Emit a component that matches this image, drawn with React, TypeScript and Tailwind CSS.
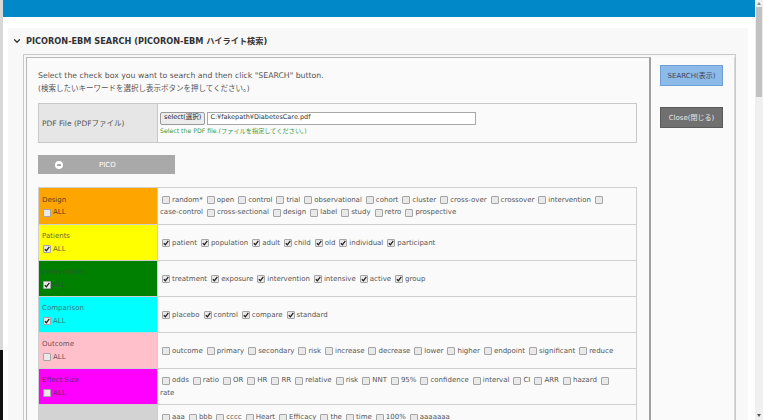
import { ChevronDown } from 'lucide-react'

type Row = {
  label: string
  bg: string
  labelColor: string
  all: boolean
  lines: string[][]
  tall?: boolean
  top?: boolean
}

// "[]" alone = trailing checkbox, "-text" = text without a checkbox
const rows: Row[] = [
  {
    label: 'Design',
    bg: 'bg-[#ffa500]',
    labelColor: 'text-[#5a4220]',
    all: false,
    tall: true,
    lines: [
      ['random*', 'open', 'control', 'trial', 'observational', 'cohort', 'cluster', 'cross-over', 'crossover', 'intervention', '[]'],
      ['-case-control', 'cross-sectional', 'design', 'label', 'study', 'retro', 'prospective'],
    ],
  },
  {
    label: 'Patients',
    bg: 'bg-[#ffff00]',
    labelColor: 'text-[#6a6a30]',
    all: true,
    lines: [['patient', 'population', 'adult', 'child', 'old', 'individual', 'participant']],
  },
  {
    label: 'Intervention',
    bg: 'bg-[#008000]',
    labelColor: 'text-[#2b5a2b]',
    all: true,
    lines: [['treatment', 'exposure', 'intervention', 'intensive', 'active', 'group']],
  },
  {
    label: 'Comparison',
    bg: 'bg-[#00ffff]',
    labelColor: 'text-[#3a7a7a]',
    all: true,
    lines: [['placebo', 'control', 'compare', 'standard']],
  },
  {
    label: 'Outcome',
    bg: 'bg-[#ffc0cb]',
    labelColor: 'text-[#6a5558]',
    all: false,
    lines: [['outcome', 'primary', 'secondary', 'risk', 'increase', 'decrease', 'lower', 'higher', 'endpoint', 'significant', 'reduce']],
  },
  {
    label: 'Effect Size',
    bg: 'bg-[#ff00ff]',
    labelColor: 'text-[#6a2a6a]',
    all: false,
    lines: [
      ['odds', 'ratio', 'OR', 'HR', 'RR', 'relative', 'risk', 'NNT', '95%', 'confidence', 'interval', 'CI', 'ARR', 'hazard', '[]'],
      ['-rate'],
    ],
  },
  {
    label: '',
    bg: 'bg-[#d3d3d3]',
    labelColor: 'text-[#555]',
    all: false,
    top: true,
    lines: [['aaa', 'bbb', 'cccc', 'Heart', 'Efficacy', 'the', 'time', '100%', 'aaaaaaa'], ['-\u00a0']],
  },
]

function Box({ checked }: { checked: boolean }) {
  return (
    <span className="inline-flex h-[8px] w-[8px] shrink-0 items-center justify-center rounded-[1px] border border-[#a5a5a5] bg-[#e9e9e9]">
      {checked ? (
        <svg width="6" height="6" viewBox="0 0 6 6">
          <path d="M0.8 3.2 L2.4 4.8 L5.3 0.9" fill="none" stroke="#222" strokeWidth="1.3" />
        </svg>
      ) : null}
    </span>
  )
}

function Token({ token, checked }: { token: string; checked: boolean }) {
  if (token === '[]') {
    return (
      <span className="mr-[4px] inline-flex items-center">
        <Box checked={checked} />
      </span>
    )
  }
  if (token.startsWith('-')) {
    return <span className="mr-[4px] ml-[-2px]">{token.slice(1)}</span>
  }
  return (
    <span className="mr-[4px] inline-flex items-center gap-[2px]">
      <Box checked={checked} />
      <span>{token}</span>
    </span>
  )
}

function KeywordRow({ row }: { row: Row }) {
  return (
    <div className={`grid ${row.tall ? 'min-h-[37px]' : 'min-h-[36px]'} grid-cols-[119px_1fr] border-b border-[#cfcfcf]`}>
      <div className={`flex flex-col ${row.top ? 'justify-start pt-[4px]' : 'justify-center'} border-r border-[#cfcfcf] px-[3px] leading-[12.5px] ${row.bg} ${row.labelColor}`}>
        {row.label ? (
          <>
            <div>{row.label}</div>
            <div className="flex items-center gap-[2px] pl-[1px]">
              <Box checked={row.all} />
              <span>ALL</span>
            </div>
          </>
        ) : null}
      </div>
      <div className={`flex flex-col ${row.top ? 'justify-start pt-[6px]' : 'justify-center'} bg-[#fafafa] pl-[4px] leading-[12.5px] text-[#555]`}>
        {row.lines.map((line, i) => (
          <div className="flex items-center whitespace-nowrap" key={i}>
            {line.map((t, j) => (
              <Token checked={row.all} key={j} token={t} />
            ))}
          </div>
        ))}
      </div>
    </div>
  )
}

export default function App() {
  return (
    <div className="flex h-[420px] w-[763px] overflow-hidden bg-white font-['DejaVu_Sans','Noto_Sans_CJK_JP',sans-serif] text-[7px] text-[#555]">
      <div className="flex w-[3px] flex-col bg-[#d8d8d8]">
        <div className="flex-1" />
        <div className="h-[70px] bg-[#111]" />
      </div>

      <div className="flex min-w-0 flex-1 flex-col">
        <div className="h-[17px] shrink-0 bg-[#0088c9]" />
        <div className="flex flex-1 flex-col pt-[11px] pr-[7px] pl-[5px]">
          <div className="flex flex-1 flex-col bg-[#f8f8f8]">
            <div className="flex items-center gap-[4px] pt-[7px] pl-[4px] text-[8.2px] font-bold text-[#333]">
              <ChevronDown size={10} strokeWidth={3} />
              <span>PICORON-EBM SEARCH (PICORON-EBM ハイライト検索)</span>
            </div>

            <div className="mt-[7px] mr-[12px] ml-[15px] flex flex-1 border border-[#c8c8c8] pt-[2px] pl-[2px]">
              <div className="flex-1 border-t border-r-2 border-l border-[#b8b8b8] border-r-[#a0a0a0] bg-[#fafafa] pt-[11px] pr-[12px] pl-[11px]">
                <div className="leading-[13px]">
                  <div className="text-[7.75px]">Select the check box you want to search and then click "SEARCH" button.</div>
                  <div className="text-[7.5px]">(検索したいキーワードを選択し表示ボタンを押してください。)</div>
                </div>

                <div className="mt-[8px] grid h-[40px] grid-cols-[119px_1fr] border border-[#c8c8c8]">
                  <div className="flex items-center border-r border-[#c8c8c8] bg-[#e6e6e6] pl-[3px] text-[7.5px]">PDF File (PDFファイル)</div>
                  <div className="flex flex-col justify-center bg-[#fafafa] pl-[2px]">
                    <div className="flex items-center gap-[2px]">
                      <span className="flex h-[13px] items-center rounded-[2px] border border-[#999] bg-[#ececec] px-[3px] text-[6.5px] text-[#222]">select(選択)</span>
                      <span className="flex h-[13px] w-[269px] items-center border border-[#a8a8a8] bg-white px-[2px] text-[6.5px] text-[#333]">C:¥fakepath¥DiabetesCare.pdf</span>
                    </div>
                    <div className="mt-[1px] text-[6.2px] text-[#3d9a3d]">Select the PDF file.(ファイルを指定してください。)</div>
                  </div>
                </div>

                <div className="mt-[12px] flex h-[19px] w-[137px] items-center bg-[#a9a9a9] pl-[17px] text-white">
                  <span className="flex h-[8px] w-[8px] items-center justify-center rounded-full bg-white">
                    <span className="h-[2px] w-[4px] bg-[#a9a9a9]" />
                  </span>
                  <span className="ml-[36px]">PICO</span>
                </div>

                <div className="mt-[13px] border-t border-r border-l border-[#cfcfcf]">
                  {rows.map((row, i) => (
                    <KeywordRow key={i} row={row} />
                  ))}
                </div>
              </div>

              <div className="flex w-[84px] flex-col gap-[21px] border-r border-[#d8d8d8] bg-[#fafafa] pt-[8px] pl-[9px]">
                <div className="flex h-[21px] w-[63px] items-center justify-center border border-[#6f9ed4] bg-[#8cbbea] text-[7px] text-[#445]">SEARCH(表示)</div>
                <div className="flex h-[21px] w-[63px] items-center justify-center border border-[#5a5a5a] bg-[#707070] text-[7px] text-[#e6e6e6]">Close(閉じる)</div>
              </div>
            </div>
          </div>
        </div>
      </div>

      <div className="flex w-[8px] flex-col items-center bg-[#f0f0f0]">
        <div className="mt-[2px] h-0 w-0 border-r-[2.5px] border-b-[3px] border-l-[2.5px] border-r-transparent border-b-[#8a8a8a] border-l-transparent" />
        <div className="mt-[2px] h-[90px] w-[6px] bg-[#c1c1c1]" />
        <div className="flex-1" />
        <div className="mb-[3px] h-0 w-0 border-t-[3px] border-r-[2.5px] border-l-[2.5px] border-t-[#555] border-r-transparent border-l-transparent" />
      </div>
    </div>
  )
}
